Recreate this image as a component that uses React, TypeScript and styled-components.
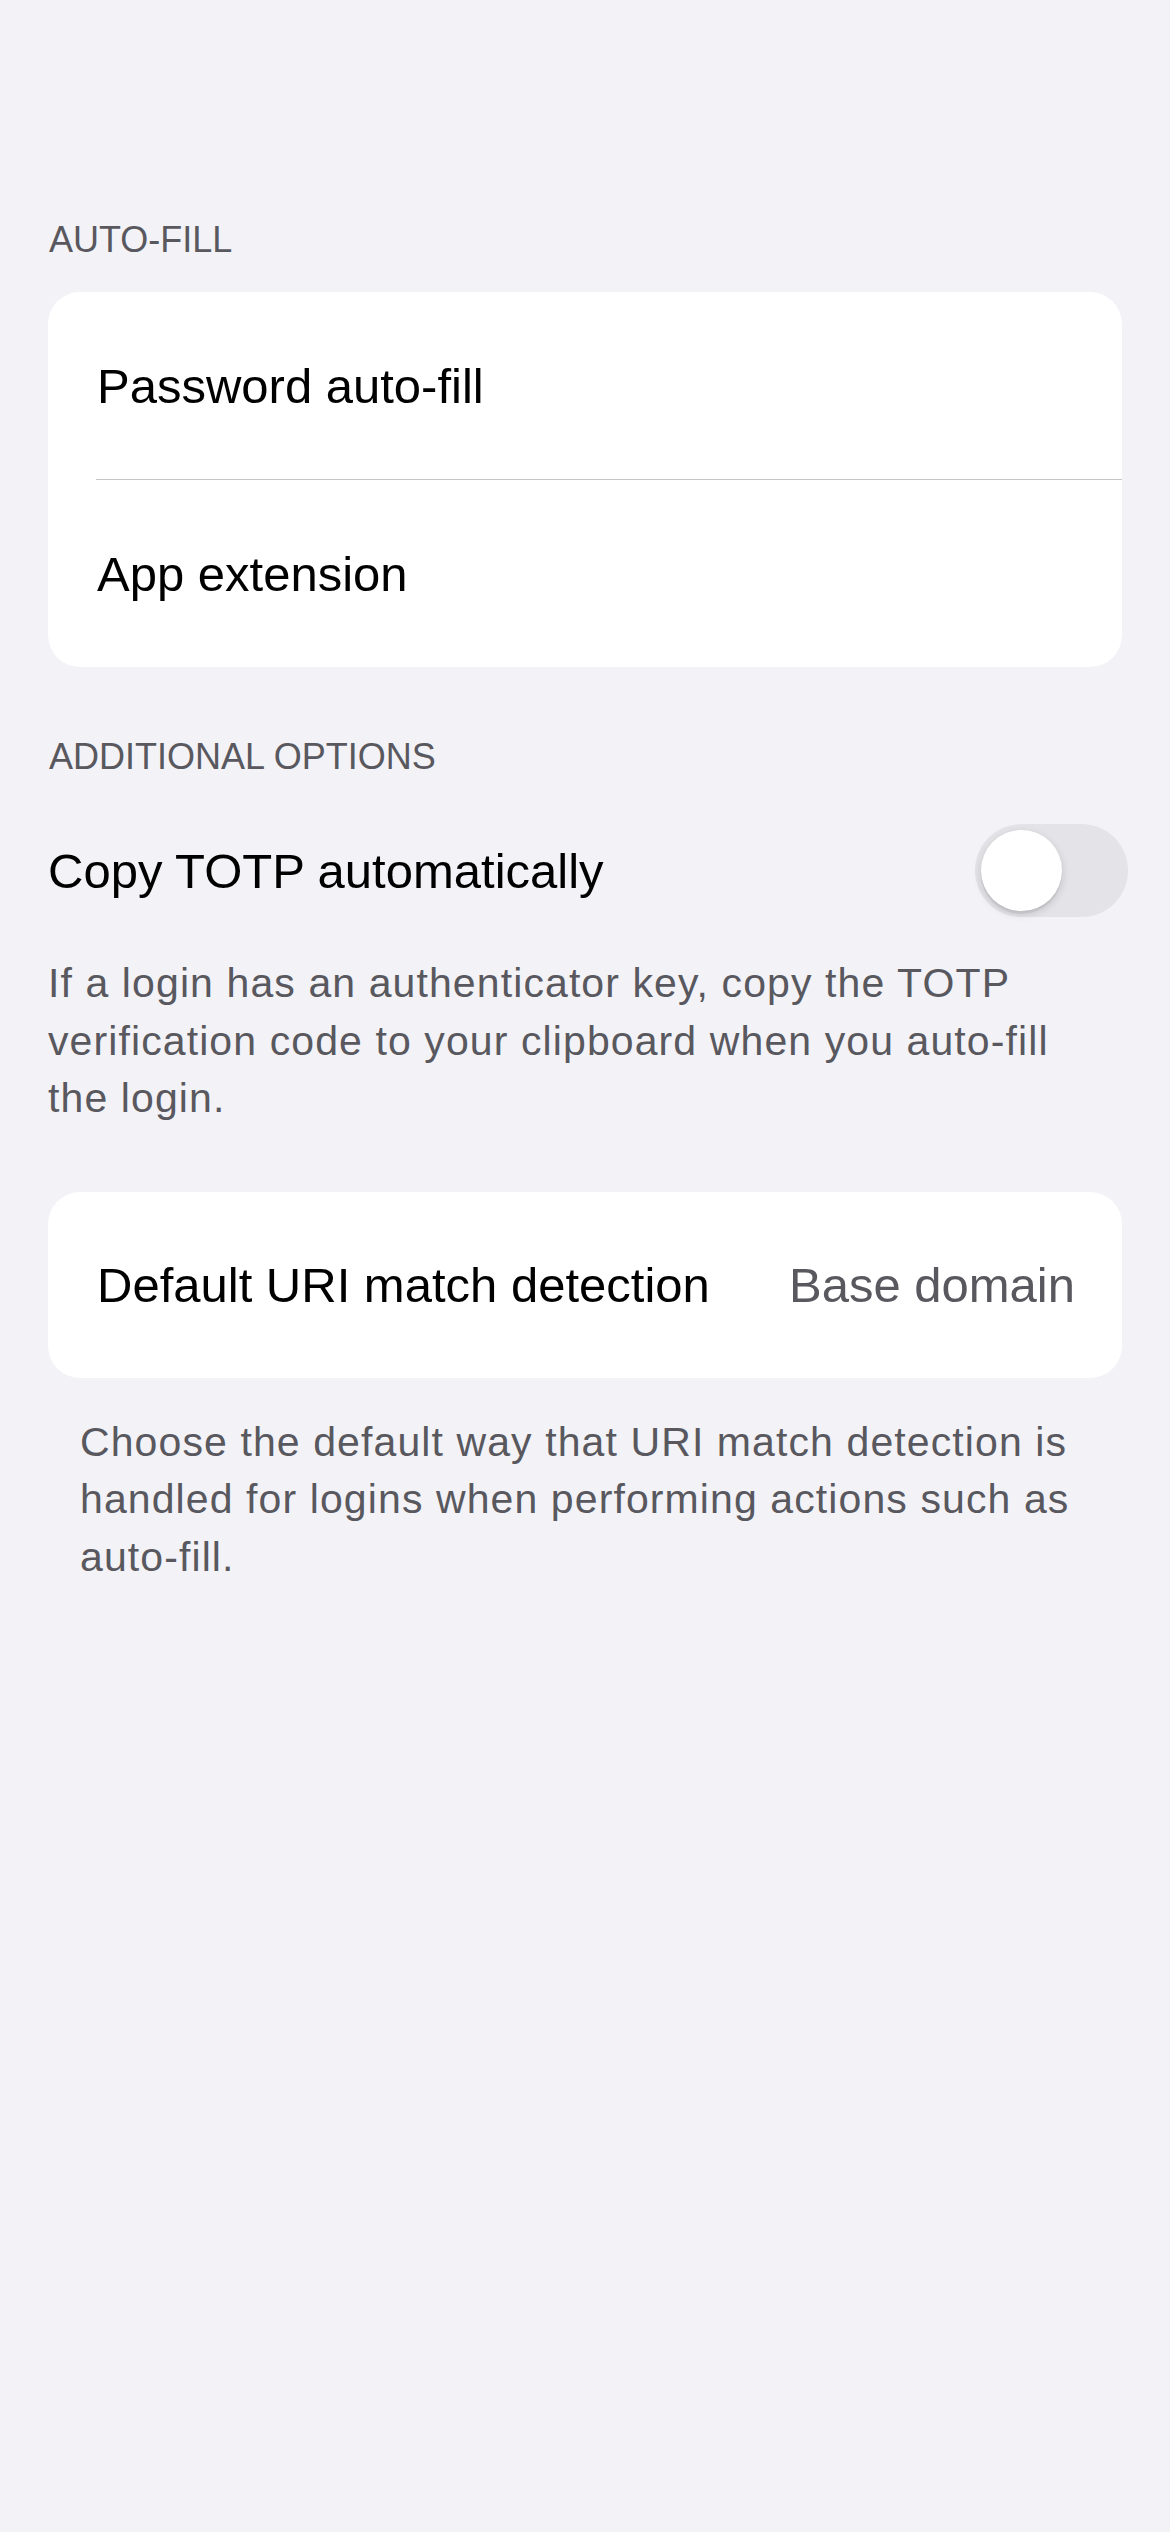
import React from "react";
import styled, { createGlobalStyle } from "styled-components";

const GlobalStyle = createGlobalStyle`
  html, body {
    margin: 0;
    padding: 0;
    background: #f2f2f7;
  }
  body {
    font-family: "Liberation Sans", Arial, sans-serif;
    -webkit-font-smoothing: antialiased;
  }
`;

const Page = styled.main`
  box-sizing: border-box;
  width: 1170px;
  min-height: 2532px;
  padding: 218px 48px 0 48px;
  display: flex;
  flex-direction: column;
  background: #f2f2f7;
`;

const SectionHeader = styled.h2<{ $top?: number }>`
  margin: ${(p) => p.$top ?? 0}px 0 0 0;
  padding-left: 1px;
  font-size: 36px;
  line-height: 44px;
  font-weight: 400;
  color: #58585e;
  text-transform: uppercase;
`;

const Card = styled.section<{ $top: number }>`
  margin-top: ${(p) => p.$top}px;
  background: #ffffff;
  border-radius: 32px;
  overflow: hidden;
  display: flex;
  flex-direction: column;
`;

const Row = styled.div<{ $height: number }>`
  box-sizing: border-box;
  height: ${(p) => p.$height}px;
  padding: 0 47px 0 49px;
  display: flex;
  align-items: center;
  justify-content: space-between;
  font-size: 49px;
  color: #000000;
`;

const Divider = styled.div`
  height: 1px;
  margin-left: 48px;
  background: #c6c6c8;
`;

const Value = styled.span`
  color: #58585e;
`;

const ToggleRow = styled.div`
  margin-top: 45px;
  margin-right: -6px;
  display: flex;
  align-items: center;
  justify-content: space-between;
  font-size: 49px;
  color: #000000;
`;

const SwitchTrack = styled.button<{ $on: boolean }>`
  box-sizing: border-box;
  width: 153px;
  height: 93px;
  padding: 6px;
  border: none;
  border-radius: 47px;
  background: ${(p) => (p.$on ? "#34c759" : "#e3e3e8")};
  display: flex;
  justify-content: ${(p) => (p.$on ? "flex-end" : "flex-start")};
  align-items: center;
  cursor: pointer;
`;

const SwitchKnob = styled.span`
  width: 81px;
  height: 81px;
  border-radius: 50%;
  background: #ffffff;
  box-shadow: 0 3px 8px rgba(0, 0, 0, 0.15), 0 3px 1px rgba(0, 0, 0, 0.06);
`;

const Footer = styled.p<{ $top: number; $left: number; $right: number }>`
  margin: ${(p) => p.$top}px 0 0 0;
  padding: 0 ${(p) => p.$right}px 0 ${(p) => p.$left}px;
  font-size: 41px;
  line-height: 57.5px;
  letter-spacing: 1.1px;
  color: #58585e;
`;

export default function App() {
  const [copyTotp, setCopyTotp] = React.useState(false);
  return (
    <>
      <GlobalStyle />
      <Page>
        <SectionHeader>Auto-fill</SectionHeader>
        <Card $top={30}>
          <Row $height={187}>Password auto-fill</Row>
          <Divider />
          <Row $height={187}>App extension</Row>
        </Card>

        <SectionHeader $top={68}>Additional options</SectionHeader>
        <ToggleRow>
          <span>Copy TOTP automatically</span>
          <SwitchTrack
            $on={copyTotp}
            aria-pressed={copyTotp}
            onClick={() => setCopyTotp((v) => !v)}
          >
            <SwitchKnob />
          </SwitchTrack>
        </ToggleRow>
        <Footer $top={38} $left={0} $right={20}>
          If a login has an authenticator key, copy the TOTP verification code
          to your clipboard when you auto-fill the login.
        </Footer>

        <Card $top={64}>
          <Row $height={186}>
            <span>Default URI match detection</span>
            <Value>Base domain</Value>
          </Row>
        </Card>
        <Footer $top={36} $left={32} $right={6}>
          Choose the default way that URI match detection is handled for logins
          when performing actions such as auto-fill.
        </Footer>
      </Page>
    </>
  );
}
